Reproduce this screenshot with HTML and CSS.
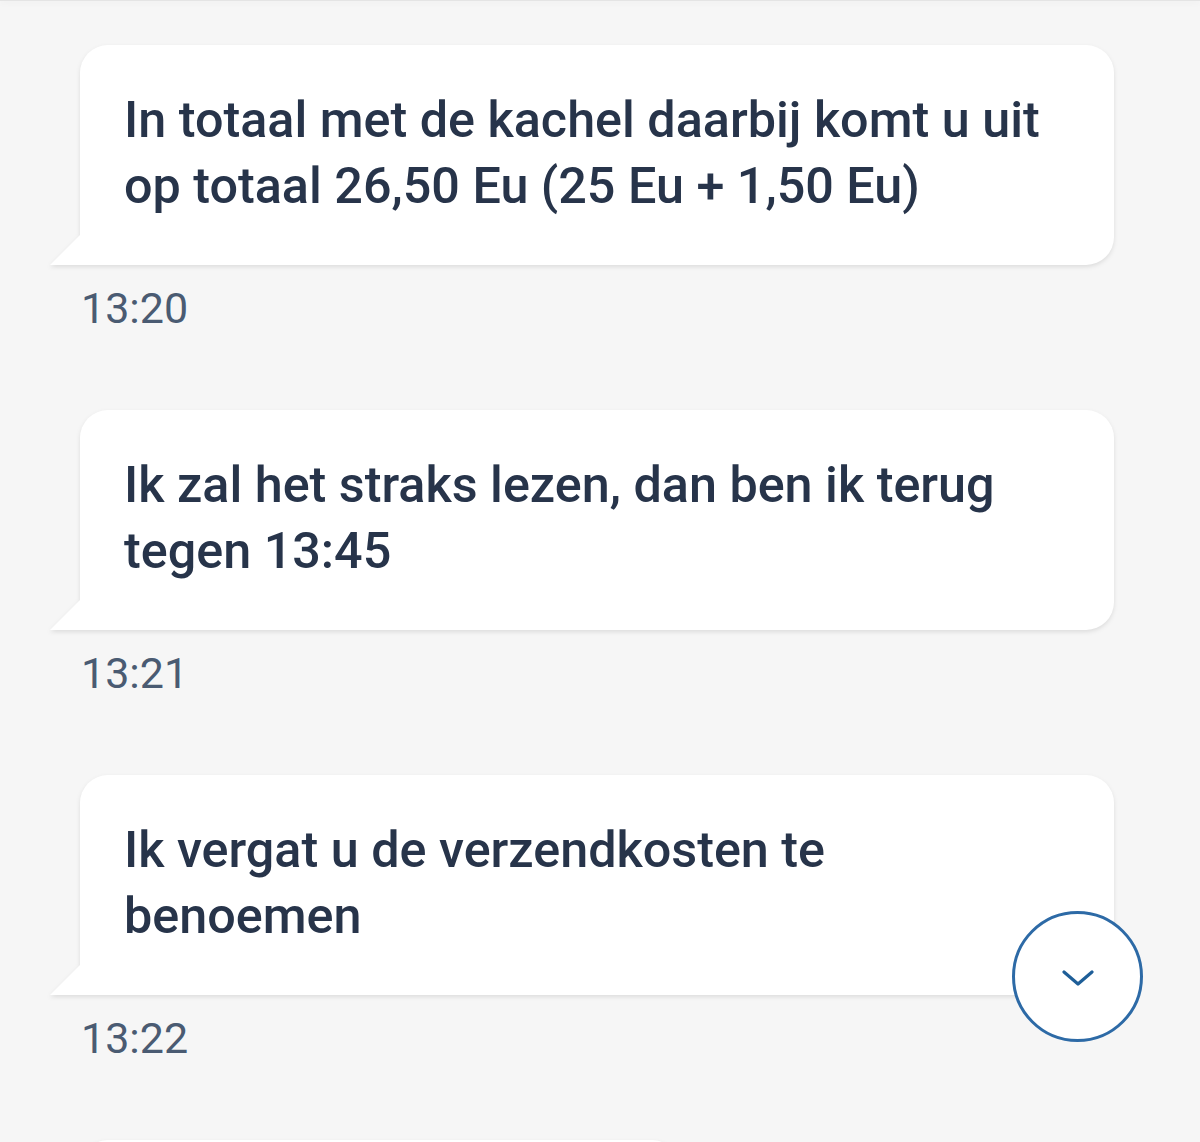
FILE: index.html
```html
<!DOCTYPE html>
<html lang="nl">

<head>
  <meta charset="UTF-8" />
  <title>Chat</title>
  <link rel="stylesheet" href="styles.css">
</head>

<body>
  <div class="top-edge"></div>
  <div id="chat">
    <div class="message">
      <div class="bubble">In totaal met de kachel daarbij komt u uit op totaal 26,50 Eu (25 Eu + 1,50 Eu)</div>
      <div class="time">13:20</div>
    </div>
    <div class="message">
      <div class="bubble">Ik zal het straks lezen, dan ben ik terug tegen 13:45</div>
      <div class="time">13:21</div>
    </div>
    <div class="message">
      <div class="bubble">Ik vergat u de verzendkosten te benoemen</div>
      <div class="time">13:22</div>
    </div>
    <div class="message">
      <div class="bubble short"></div>
    </div>
  </div>
  <button id="scrollDown" aria-label="Naar beneden">
    <svg width="32" height="18" viewBox="0 0 32 18">
      <polyline points="2,3 16,15 30,3" fill="none" stroke="#1e5e98" stroke-width="3.2" stroke-linecap="round" stroke-linejoin="round" />
    </svg>
  </button>
</body>

</html>
```

FILE: styles.css
```css
html,
body {
  margin: 0;
  height: 100%;
  overflow: hidden;
  background-color: #f6f6f6;
  font-family: Roboto, "Noto Sans", sans-serif;
}

.top-edge {
  height: 1px;
  background-color: #e4e4e4;
  box-shadow: 0 1px 7px rgba(0, 0, 0, 0.12);
}

#chat {
  display: flex;
  flex-direction: column;
  padding-top: 44px;
}

.message {
  display: flex;
  flex-direction: column;
  align-items: flex-start;
  margin-bottom: 76px;
}

.bubble {
  position: relative;
  margin-left: 80px;
  width: 930px;
  padding: 42px 60px 46px 44px;
  background-color: white;
  border-radius: 28px 28px 28px 0;
  color: #27344a;
  font-size: 50.3px;
  font-weight: 500;
  line-height: 66px;
  filter: drop-shadow(0 2px 2px rgba(0, 0, 0, 0.1));
}

/* little tail at the bottom left */
.bubble::before {
  content: "";
  position: absolute;
  left: -30px;
  bottom: 0;
  width: 0;
  height: 0;
  border-bottom: 30px solid white;
  border-left: 30px solid transparent;
}

.bubble.short {
  width: 496px;
  height: 132px;
}

.time {
  margin-left: 81px;
  margin-top: 17px;
  color: #4a5b72;
  font-size: 43px;
  line-height: 52px;
}

#scrollDown {
  position: fixed;
  left: 1012px;
  top: 911px;
  width: 131px;
  height: 131px;
  padding: 0;
  border: 3px solid #2d6aa6;
  border-radius: 50%;
  background-color: white;
  display: flex;
  justify-content: center;
  align-items: center;
  cursor: pointer;
}

#scrollDown svg {
  margin-top: 2px;
}
```
